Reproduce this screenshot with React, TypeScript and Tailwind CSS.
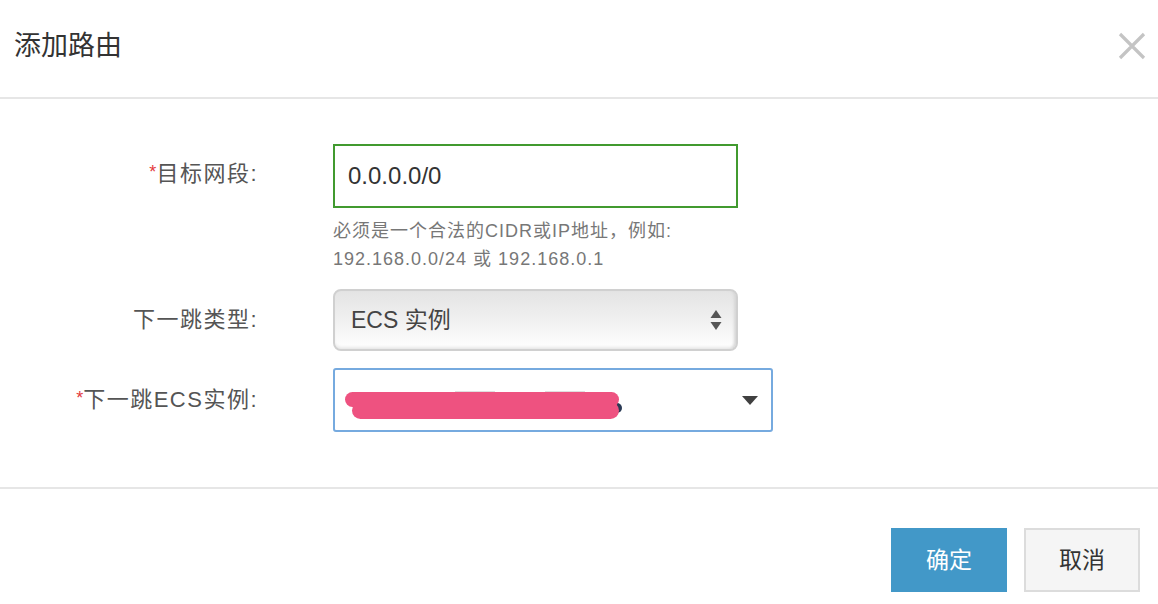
import React from 'react';

const FONT = '"Liberation Sans", "Noto Sans CJK SC", sans-serif';

// Pink marker strokes covering the instance name
function Redaction() {
  return (
    <svg width="290" height="34" viewBox="0 0 290 34" className="block">
      <rect x="110" y="0" width="40" height="2" fill="#b0b0b0" opacity="0.4" />
      <rect x="200" y="0" width="40" height="2" fill="#b0b0b0" opacity="0.4" />
      <circle cx="272" cy="17" r="5" fill="#2a3a55" />
      <rect x="0" y="1" width="274" height="15" rx="7.5" fill="#ee5280" />
      <rect x="7" y="11" width="267" height="17" rx="8.5" fill="#ee5280" />
    </svg>
  );
}

function FieldLabel({ required, children }: { required?: boolean; children: React.ReactNode }) {
  return (
    <div className="w-[258px] shrink-0 text-right text-[22px] tracking-[1.5px] text-[#555] leading-none whitespace-nowrap">
      {required && <span className="text-[#e4393c] text-[18px] align-top tracking-normal">*</span>}
      {children}
    </div>
  );
}

export default function App() {
  return (
    <div className="w-[1158px] h-[604px] bg-white flex flex-col overflow-hidden" style={{ fontFamily: FONT }}>
      {/* Header */}
      <div className="h-[99px] shrink-0 flex items-center justify-between pl-[14px] pr-[12px] border-b-2 border-[#e6e6e6]">
        <h1 className="text-[27px] text-[#333] leading-none pb-[4px]">添加路由</h1>
        <svg width="28" height="28" viewBox="0 0 28 28" className="mb-[6px]">
          <path d="M2 2 L26 26 M26 2 L2 26" stroke="#c4c4c4" strokeWidth="3.2" strokeLinecap="butt" />
        </svg>
      </div>

      {/* Body */}
      <div className="h-[390px] shrink-0 pt-[45px] flex flex-col border-b-2 border-[#e6e6e6]">
        {/* Target CIDR */}
        <div className="flex items-start">
          <div className="h-[64px] flex items-center pb-[5px]">
            <FieldLabel required>目标网段:</FieldLabel>
          </div>
          <div className="ml-[75px] flex flex-col">
            <div className="w-[405px] h-[64px] border-2 border-[#419a2f] flex items-center pl-[13px] text-[24px] text-[#333]">
              0.0.0.0/0
            </div>
            <div className="mt-[9px] text-[18px] leading-[28px] text-[#777] tracking-[1px]">
              <div>必须是一个合法的CIDR或IP地址，例如:</div>
              <div>192.168.0.0/24 或 192.168.0.1</div>
            </div>
          </div>
        </div>

        {/* Next hop type */}
        <div className="flex items-center mt-[16px]">
          <FieldLabel>下一跳类型:</FieldLabel>
          <div className="ml-[75px] relative w-[405px] h-[62px] rounded-[8px] border-2 border-[#d0d0d0] bg-gradient-to-b from-[#e4e4e4] via-[#f0f0f0] to-[#ffffff] shadow-[inset_-4px_0_3px_-2px_#d6d6d6,inset_0_-3px_3px_-1px_#e8e8e8] flex items-center justify-between pl-[16px] pr-[14px]">
            <span className="text-[23px] text-[#444]">ECS 实例</span>
            <svg width="12" height="24" viewBox="0 0 12 24">
              <path d="M6 2 L11.5 10 L0.5 10 Z" fill="#555" />
              <path d="M0.5 14 L11.5 14 L6 22 Z" fill="#555" />
            </svg>
          </div>
        </div>

        {/* Next hop instance */}
        <div className="flex items-center mt-[17px]">
          <FieldLabel required>下一跳ECS实例:</FieldLabel>
          <div className="ml-[75px] w-[440px] h-[64px] rounded-[3px] border-2 border-[#76aadf] flex items-center justify-between pl-[10px] pr-[13px]">
            <div className="pt-[16px]">
              <Redaction />
            </div>
            <svg width="16" height="9" viewBox="0 0 16 9">
              <path d="M0 0 L16 0 L8 9 Z" fill="#404040" />
            </svg>
          </div>
        </div>
      </div>

      {/* Footer */}
      <div className="flex-1 flex items-start justify-end gap-[17px] pt-[39px] pr-[18px]">
        <button className="w-[116px] h-[64px] bg-[#4298c8] text-white text-[23px]">确定</button>
        <button className="w-[116px] h-[64px] bg-[#f5f5f5] border-2 border-[#dcdcdc] text-[#333] text-[23px]">取消</button>
      </div>
    </div>
  );
}
